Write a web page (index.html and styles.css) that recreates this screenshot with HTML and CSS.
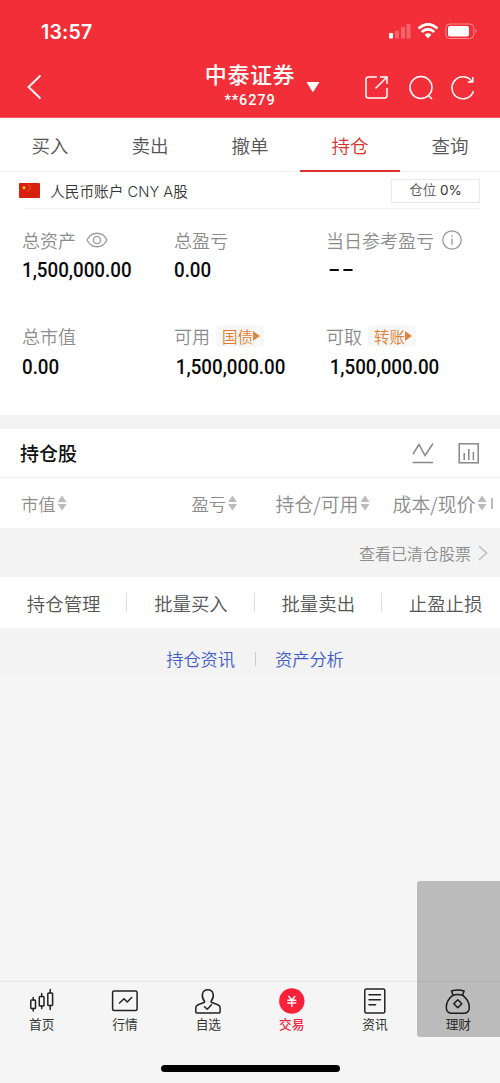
FILE: index.html
```html
<!DOCTYPE html>
<html lang="zh-CN">
<head>
<meta charset="utf-8">
<title>持仓</title>
<link rel="stylesheet" href="styles.css">
</head>
<body>
<div class="app">
  <header class="header">
    <div class="status">
      <span class="clock">13:57</span>
      <svg class="status-icons" width="90" height="18" viewBox="0 0 90 18" fill="#fff">
        <rect x="1" y="10" width="4" height="5.5" rx="1"/>
        <g opacity=".25"><rect x="7" y="7.500" width="4" height="8" rx="1"/><rect x="13" y="4" width="4" height="11.500" rx="1"/><rect x="18.500" y="1" width="4" height="14.500" rx="1"/></g>
        <g fill="none" stroke="#fff" stroke-width="2.700"><path d="M30.500 5.500Q40 -3 49.500 5.500"/><path d="M33.700 9Q40 3.500 46.300 9"/></g>
        <path d="M36.600 11.700Q40 9 43.400 11.700L40 15.400z"/>
        <rect x="57.800" y="1" width="28" height="14.500" rx="4" fill="none" stroke="#fff" stroke-opacity=".45"/>
        <rect x="60" y="3" width="21" height="10.500" rx="2"/>
        <path d="M87.500 6q2.200 2.200 0 4.500z" opacity=".5"/>
      </svg>
    </div>
    <div class="titlebar">
      <svg class="back" width="18" height="28" viewBox="0 0 18 28" fill="none" stroke="#fff" stroke-width="1.800"><path d="M14.500 2.500L2.500 14L14.500 25.500"/></svg>
      <div class="broker">
        <div class="broker-name">中泰证券</div>
        <div class="broker-id">**6279</div>
      </div>
      <svg class="caret" width="14" height="12" viewBox="0 0 14 12"><path d="M.5 1h13L7.500 10.500q-.6.700-1.200 0z" fill="#fff"/></svg>
      <svg class="tools" width="114" height="28" viewBox="0 0 114 28" fill="none" stroke="#fff" stroke-width="1.500">
        <path d="M14 3H5.500Q3 3 3 5.500v16Q3 24 5.500 24h16q2.500 0 2.500-2.500V14M12.500 14.500L23.500 3.500M17 3h7v7"/>
        <circle cx="58" cy="13.500" r="11"/><path d="M65.500 21.500l3.500 3.500"/>
        <path d="M109 7.500A11 11 0 1 0 110.500 17M109.800 3v5h-5"/>
      </svg>
    </div>
  </header>

  <nav class="tabs">
    <span>买入</span><span>卖出</span><span>撤单</span><span class="active">持仓</span><span>查询</span>
  </nav>

  <section class="account">
    <svg width="21" height="15" viewBox="0 0 21 15"><rect width="21" height="15" rx="1" fill="#d8200f"/><path fill="#ffd91c" d="M5 2.300l.6 1.600h1.700L5.900 5l.6 1.700L5 5.700 3.500 6.700 4.100 5 2.700 3.900h1.700z"/><g fill="#f0a01c"><circle cx="9.300" cy="2" r=".6"/><circle cx="11" cy="3.500" r=".6"/><circle cx="11" cy="5.700" r=".6"/><circle cx="9.300" cy="7.500" r=".6"/></g></svg>
    <span class="account-name">人民币账户 CNY A股</span>
    <span class="ratio">仓位 <b>0%</b></span>
  </section>

  <section class="metrics">
    <div class="metric">
      <div class="label">总资产<svg class="eye" width="22" height="16" viewBox="0 0 22 16" fill="none" stroke="#999" stroke-width="1.300"><path d="M1 8C5.500-1 16.500-1 21 8C16.500 17 5.500 17 1 8z"/><circle cx="11" cy="8" r="3.600"/></svg></div>
      <div class="value">1,500,000.00</div>
    </div>
    <div class="metric"><div class="label">总盈亏</div><div class="value">0.00</div></div>
    <div class="metric">
      <div class="label">当日参考盈亏<svg class="info" width="20" height="20" viewBox="0 0 20 20" fill="none" stroke="#999" stroke-width="1.300"><circle cx="10" cy="10" r="9.200"/><path d="M10 8.500v6.300M10 5.200v1.700"/></svg></div>
      <div class="value dashes"><i></i><i></i></div>
    </div>
    <div class="metric"><div class="label">总市值</div><div class="value">0.00</div></div>
    <div class="metric"><div class="label">可用<span class="tag">国债<i></i></span></div><div class="value inset">1,500,000.00</div></div>
    <div class="metric"><div class="label">可取<span class="tag">转账<i></i></span></div><div class="value inset wide">1,500,000.00</div></div>
  </section>

  <section class="holdings">
    <div class="section-head">
      <h2>持仓股</h2>
      <svg width="68" height="24" viewBox="0 0 68 24" fill="none" stroke="#888" stroke-width="1.500"><path d="M1 13L7 3.500L13 14.500L21 2.500M.5 21.500h20.500"/><rect x="47.200" y="2.800" width="19" height="19"/><path d="M52.200 12v7M56.800 8v11M61.400 11v8"/></svg>
    </div>
    <div class="columns">
      <span>市值<i class="sort"></i></span>
      <span>盈亏<i class="sort"></i></span>
      <span>持仓/可用<i class="sort"></i></span>
      <span>成本/现价<i class="sort"></i></span>
      <i class="more"></i>
    </div>
  </section>

  <div class="cleared">查看已清仓股票<svg width="10" height="16" viewBox="0 0 10 16" fill="none" stroke="#bbb" stroke-width="1.500"><path d="M1 1l7.500 7L1 15"/></svg></div>

  <div class="actions"><span>持仓管理</span><span>批量买入</span><span>批量卖出</span><span>止盈止损</span></div>

  <div class="links"><span>持仓资讯</span><span>资产分析</span></div>
  <main class="blank"></main>

  <footer class="bottom">
    <nav class="bottom-nav">
      <div><svg width="28" height="28" viewBox="0 0 28 28"><g><rect x="2.800" y="12" width="4.700" height="8.500" rx=".8"/><rect x="11.300" y="8.500" width="4.700" height="9.500" rx=".8"/><rect x="19.800" y="5" width="4.800" height="12.500" rx=".8"/><path d="M5.200 9.500V12M5.200 20.500v2.500M13.700 5.500v3M13.700 18v2.500M22.200 1.500V5M22.200 17.500v4"/></g></svg>首页</div>
      <div><svg width="28" height="28" viewBox="0 0 28 28"><rect x="1.600" y="3" width="24.500" height="19.500" rx="1.500"/><path d="M8.500 15l4.500-4.200 3.200 3.200 4.500-4.500"/></svg>行情</div>
      <div><svg width="28" height="28" viewBox="0 0 28 28"><path d="M10.500 13.300C7 9 7.500 1.700 13.800 1.700s6.800 7.300 3.300 11.600v1l6.700 2.500q2.300 1 2.300 3V24q0 1-1 1H2.800q-1 0-1-1v-4.200q0-2 2.300-3l6.400-2.500z"/><path d="M10.500 18.700l2.700 2.600 4.300-4.500"/></svg>自选</div>
      <div class="current"><svg width="28" height="28" viewBox="0 0 28 28"><circle class="coin" cx="13.800" cy="13" r="12.700"/><path class="yen" d="M10.800 8.500l3 3.500 3-3.500M9.800 12.300h8M9.800 15h8M13.800 12v6.500"/></svg>交易</div>
      <div><svg width="28" height="28" viewBox="0 0 28 28"><rect x="3.800" y="1" width="20" height="24" rx="1.500"/><path d="M8 6.800h11.500M8 11.800h11.500M8 16.800h6.500"/></svg>资讯</div>
      <div><svg width="28" height="28" viewBox="0 0 28 28"><path d="M9 7.200L7.500 3Q13.800 1 20.100 3L18.500 7.200Q13.800 5.700 9 7.200zC4.500 10.500 2.300 15 2.300 19.500Q2.300 25.300 8 25.300h11.600q5.700 0 5.700-5.800C25.300 15 23 10.500 18.500 7.200M13.800 11.700l4 4-4 4-4-4z"/></svg>理财</div>
    </nav>
    <div class="home-bar"></div>
  </footer>
  <div class="overlay"></div>
</div>
</body>
</html>
```
FILE: styles.css
```css
* { box-sizing: border-box; }
body { margin: 0; font-family: "Liberation Sans", "Noto Sans CJK SC", sans-serif; font-weight: 350; }
svg { display: block; flex: none; }
.app { position: relative; width: 500px; height: 1083px; display: flex; flex-direction: column; overflow: hidden; background: #f5f5f5; white-space: nowrap; }
.app > * { flex: none; }

.header { height: 118px; background: #f22f38; color: #fff; border-bottom: 1px solid #f56068; }
.status { height: 60px; padding: 4px 20px 0 41px; display: flex; align-items: center; justify-content: space-between; }
.clock { font: 600 19.5px/24px Inter, sans-serif; letter-spacing: .2px; }
.status-icons { margin: 0 2px 0 0; width: 90px; }
.titlebar { height: 57px; display: flex; align-items: flex-start; }
.back { margin: 13px 0 0 26px; }
.broker { width: 92px; margin-left: 160px; text-align: center; }
.broker-name { font-size: 22px; line-height: 28px; font-weight: 500; letter-spacing: .6px; padding-top: 2px; }
.broker-id { font: 500 14.500px/20px Roboto, sans-serif; letter-spacing: .9px; margin-top: 1px; }
.caret { margin: 21px 0 0 10px; }
.tools { margin: 14px 0 0 43px; }

.tabs { height: 54px; display: grid; grid-template-columns: repeat(5, 1fr); background: #fff; border-bottom: 1px solid #f1f1f1; }
.tabs span { height: 54px; line-height: 58px; text-align: center; font-size: 18.500px; color: #555; }
.tabs .active { color: #dc302e; border-bottom: 2px solid #dc302e; }

.account { height: 37px; padding: 0 20px 0 19px; display: flex; align-items: center; background: linear-gradient(#f1f1f1, #f1f1f1) 23px 100% / 457px 1px no-repeat #fff; color: #333; }
.account-name { margin-left: 10px; font: 350 14.700px/20px Inter, "Noto Sans CJK SC", sans-serif; padding-top: 2px; }
.ratio { margin-left: auto; width: 89px; height: 24px; border: 1px solid #e9e9e9; text-align: center; font: 350 13.500px/21px Inter, "Noto Sans CJK SC", sans-serif; color: #555; }
.ratio b { font-weight: 400; color: #333; }

.metrics { height: 206px; padding: 16px 0 0 22px; display: grid; grid-template-columns: 152px 152px 1fr; grid-template-rows: 96.500px 96.500px; background: #fff; }
.label { height: 29px; display: flex; align-items: center; font-size: 18px; color: #8c8c8c; }
.eye { margin-left: 10px; }
.info { margin-left: 8px; }
.value { height: 32px; line-height: 33px; font-family: Roboto, sans-serif; font-weight: 500; font-size: 20.500px; color: #0a0a0a; transform: scaleX(.915); transform-origin: left; }
.inset { padding-left: 2px; }
.wide { padding-left: 4px; }
.dashes { display: flex; align-items: center; gap: 5px; padding-left: 4px; }
.dashes i { width: 10px; height: 2px; background: #0a0a0a; }
.tag { margin-left: 6px; height: 22px; padding: 0 4px 0 6px; display: flex; align-items: center; font-size: 15.500px; color: #e67b2c; background: #f7f7f7; border-radius: 2px; }
.tag i { border-left: 7px solid #e88439; border-top: 5.500px solid transparent; border-bottom: 5.500px solid transparent; }

.holdings { background: #fff; border-top: 14px solid #f3f3f3; height: 113px; }
.section-head { height: 49px; padding: 0 20px; display: flex; align-items: center; justify-content: space-between; border-bottom: 1px solid #eee; }
.section-head h2 { margin: 0; padding-bottom: 1px; font-size: 19px; font-weight: 500; color: #111; }
.columns { height: 50px; display: grid; grid-template-columns: 98px 118px 133px 117px 7px; justify-content: end; align-items: center; padding-right: 6px; color: #8c8c8c; font: 350 17.300px "Noto Sans CJK SC", sans-serif; }
.columns span { display: flex; align-items: center; justify-content: flex-end; }
.columns span:first-child { justify-content: flex-start; }
.columns { grid-template-columns: 98px 118px 132.500px 117px 7px; }
.columns span { gap: 2px; }
.columns span:nth-child(n+3) { font-size: 18.900px; }
.columns { justify-content: start; padding-left: 21px; }
.sort { width: 9px; height: 15px; background: #bbb; clip-path: polygon(50% 0, 100% 43%, 0 43%, 0 57%, 100% 57%, 50% 100%, 0 57%, 0 43%); }
.more { width: 2px; height: 11px; margin-left: 4px; background: #bbb; }

.cleared { height: 49px; padding: 0 12px 0; display: flex; align-items: center; justify-content: flex-end; gap: 7px; color: #8c8c8c; font-size: 16px; background: #f3f3f3; }
.actions { height: 51px; display: grid; grid-template-columns: repeat(4, 127.300px); background: #fff; color: #555; font-size: 18.400px; }
.actions span { display: flex; align-items: center; justify-content: center; background: linear-gradient(#ddd, #ddd) 100% 50% / 1px 19px no-repeat; }
.actions span:last-child { background: none; }
.links { height: 48px; padding: 13px 0 0 10px; display: flex; justify-content: center; align-items: center; color: #405bc8; font-size: 17.200px; background: #f3f3f3; }
.links span + span { margin-left: 20px; padding-left: 20px; background: linear-gradient(#ccc, #ccc) 0 50% / 1px 14px no-repeat; }
.app > .blank { flex: 1; }

.bottom { height: 102px; border-top: 1px solid #e6e6e6; display: flex; flex-direction: column; align-items: center; }
.bottom-nav { width: 500px; height: 83px; display: grid; grid-template-columns: repeat(6, 1fr); }
.bottom-nav div { display: flex; flex-direction: column; align-items: center; padding-top: 6px; font-size: 12.700px; line-height: 19px; font-weight: 400; color: #333; }
.bottom-nav svg { fill: none; stroke: #222; stroke-width: 1.500; stroke-linecap: round; stroke-linejoin: round; }
.bottom-nav .current { color: #f32642; font-weight: 500; }
.bottom-nav .coin { fill: #fb2138; stroke: none; }
.bottom-nav .yen { stroke: #fff; }
.home-bar { width: 179px; height: 7px; border-radius: 4px; background: #000; }
.overlay { position: absolute; left: 417px; top: 881px; width: 83px; height: 156px; background: rgba(0, 0, 0, .235); border-radius: 3px 0 0 3px; }
```
